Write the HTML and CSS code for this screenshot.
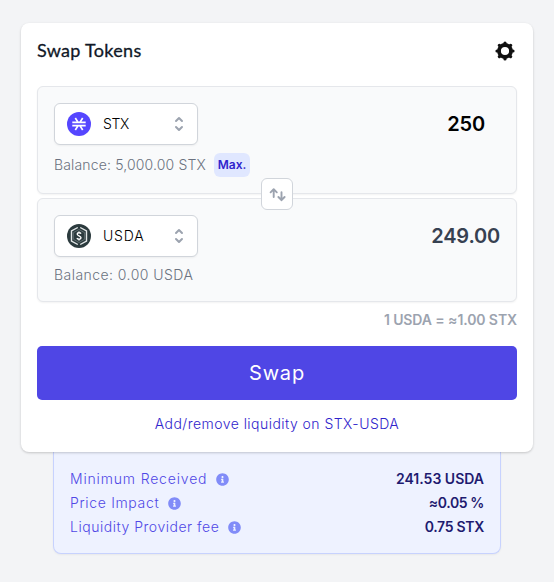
FILE: index.html
```html
<!DOCTYPE html>
<html lang="en">
<head>
<meta charset="utf-8">
<title>Swap Tokens</title>
<link rel="stylesheet" href="styles.css">
</head>
<body>
<svg class="defs" width="0" height="0" aria-hidden="true">
  <symbol id="selector" viewBox="0 0 20 20"><path fill-rule="evenodd" d="M10 3a1 1 0 01.707.293l3 3a1 1 0 01-1.414 1.414L10 5.414 7.707 7.707a1 1 0 01-1.414-1.414l3-3A1 1 0 0110 3zm-3.707 9.293a1 1 0 011.414 0L10 14.586l2.293-2.293a1 1 0 011.414 1.414l-3 3a1 1 0 01-1.414 0l-3-3a1 1 0 010-1.414z"/></symbol>
  <symbol id="info" viewBox="0 0 512 512"><path d="M256 8C119 8 8 119 8 256s111 248 248 248 248-111 248-248S393 8 256 8zm0 110c23.200 0 42 18.800 42 42s-18.800 42-42 42-42-18.800-42-42 18.800-42 42-42zm56 254c0 6.600-5.400 12-12 12h-88c-6.600 0-12-5.400-12-12v-24c0-6.600 5.400-12 12-12h12v-64h-12c-6.600 0-12-5.400-12-12v-24c0-6.600 5.400-12 12-12h64c6.600 0 12 5.400 12 12v100h12c6.600 0 12 5.400 12 12v24z"/></symbol>
</svg>
<main class="card">
  <header class="head">
    <h1 class="title">Swap Tokens</h1>
    <svg class="gear" viewBox="0 0 20 20"><circle cx="10" cy="10" r="6" fill="none" stroke="#111" stroke-width="3.800"/><path d="M10 2V4M10 16v2M2 10H4M16 10h2M4.400 4.400l1.300 1.300M14.300 14.300l1.300 1.300M4.400 15.600l1.300-1.300M14.300 5.700l1.300-1.300" stroke="#111" stroke-width="3.200" stroke-linecap="round"/></svg>
  </header>
  <section class="panel from">
    <div class="line">
      <button class="select">
        <svg class="coin" viewBox="0 0 24 24"><circle cx="12" cy="12" r="12" fill="#5546ff"/><path d="M5.300 10.400h13.400M5.300 13.600h13.400M8.300 6l2.800 4.400M15.700 6l-2.800 4.400M8.300 18l2.800-4.400M15.700 18l-2.800-4.400" fill="none" stroke="#fff" stroke-width="1.700"/></svg>
        <span class="symbol stx">STX</span>
        <svg class="chevrons"><use href="#selector"/></svg>
      </button>
      <span class="amount a250">250</span>
    </div>
    <div class="balance"><span class="b1">Balance: 5,000.00 STX</span><span class="max">Max.</span></div>
    <button class="flip"><svg viewBox="0 0 20 20"><path d="M6.700 13V5.700M3.600 8.300L6.700 5.200l3.100 3.100M14.500 8.200v8M11.400 13l3.100 3.100 3.100-3.100" fill="none" stroke="#9ca3af" stroke-width="1.900" stroke-linecap="round" stroke-linejoin="round"/></svg></button>
  </section>
  <section class="panel to">
    <div class="line">
      <button class="select">
        <svg class="coin" viewBox="0 0 24 24"><circle cx="12" cy="12" r="12" fill="#2c3b3e"/><path d="M10.800 3.500L4.500 7v10l6.300 3.500M13.200 3.500L19.500 7v10l-6.300 3.500" fill="none" stroke="#e4e8e9" stroke-width="1.400"/><path d="M12 5.500l5.600 3.200v6.600L12 18.500l-5.600-3.200V8.700z" fill="none" stroke="#7d898c" stroke-width=".6"/><path d="M14 9.600c-.6-1.100-3.700-1.300-3.800.5-.1 1.900 3.800 1.600 3.800 3.700 0 1.800-3.300 1.800-4.100.4M12 7.600v1.400M12 15v1.400" fill="none" stroke="#fff" stroke-width="1.400"/></svg>
        <span class="symbol usda">USDA</span>
        <svg class="chevrons"><use href="#selector"/></svg>
      </button>
      <span class="amount a249">249.00</span>
    </div>
    <div class="balance"><span class="b2">Balance: 0.00 USDA</span></div>
  </section>
  <p class="rate">1 USDA = ≈1.00 STX</p>
  <button class="swap">Swap</button>
  <a class="link">Add/remove liquidity on STX-USDA</a>
</main>
<dl class="details">
  <div class="row"><dt><span class="d1">Minimum Received</span><svg class="info"><use href="#info"/></svg></dt><dd class="v1">241.53 USDA</dd></div>
  <div class="row"><dt><span class="d2">Price Impact</span><svg class="info"><use href="#info"/></svg></dt><dd class="v2">≈0.05 %</dd></div>
  <div class="row"><dt><span class="d3">Liquidity Provider fee</span><svg class="info"><use href="#info"/></svg></dt><dd class="v3">0.75 STX</dd></div>
</dl>
</body>
</html>
```
FILE: styles.css
```css
* { box-sizing: border-box; }
body { margin: 0; padding: 23px 21px 0; height: 582px; overflow: hidden; background: #f3f4f6; font-family: Inter, "Open Sans", sans-serif; font-size: 14px; font-weight: 350; line-height: 20px; color: #111; white-space: nowrap; }
button { font: inherit; padding: 0; margin: 0; }
h1, p, dl, dd { margin: 0; }
svg { display: block; flex: none; }
.defs { position: absolute; }
.card { position: relative; height: 429px; padding: 16px; border-radius: 8px; background: #fff; box-shadow: 0 1px 3px rgba(0,0,0,.12), 0 1px 2px rgba(0,0,0,.08); }
.head { display: flex; justify-content: space-between; align-items: center; height: 24px; margin-bottom: 23px; }
.title { font: 400 18px/22px Lato, sans-serif; -webkit-text-stroke: .3px #111827; letter-spacing: .3px; color: #111827; margin-top: -2px; }
.gear { width: 20px; height: 20px; margin-right: 2px; }
.panel { position: relative; padding: 16px; border: 1px solid #e5e7eb; border-radius: 6px; background: #f9fafb; box-shadow: 0 1px 2px rgba(0,0,0,.05); }
.from { height: 108px; margin-bottom: 4px; }
.to { height: 104px; }
.line { display: flex; align-items: center; justify-content: space-between; height: 42px; }
.select { display: flex; align-items: center; width: 144px; height: 42px; padding: 0 8px 0 12px; border: 1px solid #d1d5db; border-radius: 6px; background: #fff; box-shadow: 0 1px 2px rgba(0,0,0,.05); color: #000; }
.coin { width: 24px; height: 24px; margin-right: 12px; }
.usda { letter-spacing: .8px; }
.stx { letter-spacing: -.4px; }
.chevrons { width: 20px; height: 20px; margin-left: auto; fill: #9ca3af; }
.amount { font-size: 20px; font-weight: 600; letter-spacing: -.2px; }
.a250 { margin-right: 15px; color: #000; }
.a249 { color: #374151; }
.balance { display: flex; align-items: center; height: 24px; margin-top: 8px; color: #6b7280; }
.to .balance { margin-top: 6px; }
.b1 { width: 160px; letter-spacing: .15px; }
.b2 { letter-spacing: .45px; }
.max { width: 36px; height: 24px; border-radius: 6px; background: #e0e7ff; color: #3024cc; font-size: 12px; font-weight: 600; line-height: 24px; text-align: center; }
.flip { position: absolute; z-index: 1; left: 223px; top: 91px; display: grid; place-items: center; width: 32px; height: 32px; border: 1px solid #d1d5db; border-radius: 6px; background: #fff; }
.flip svg { width: 20px; height: 20px; }
.rate { margin: 8px 0 16px; text-align: right; font-weight: 600; letter-spacing: -.1px; color: #9ca3af; }
.swap { display: block; width: 100%; height: 54px; border: 0; border-radius: 5px; background: #4f46e5; color: #fff; font-size: 20px; font-weight: 400; letter-spacing: .8px; }
.link { display: block; margin-top: 14px; text-align: center; letter-spacing: .46px; color: #3024cc; }
.details { width: 448px; height: 102px; margin: 0 32px; padding: 15px 16px 0; border: 1px solid #c7d2fe; border-top: 0; border-radius: 0 0 8px 8px; background: #eef2ff; box-shadow: 0 1px 2px rgba(0,0,0,.05); }
.row { display: flex; align-items: center; justify-content: space-between; height: 24px; }
.row dt { display: flex; align-items: center; gap: 9px; color: #5048e6; }
.row dd { font-weight: 600; color: #1e1b70; }
.d1 { letter-spacing: .83px; }
.d2 { letter-spacing: .67px; }
.d3 { letter-spacing: .52px; }
.v2 { letter-spacing: -.4px; }
.v3 { letter-spacing: -.3px; }
.info { width: 13px; height: 13px; fill: #818cf8; }
```
